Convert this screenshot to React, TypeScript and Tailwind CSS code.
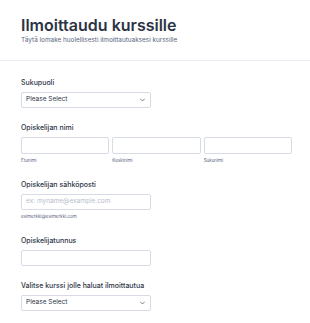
import React from 'react';

const Select = () => (
  <div className="flex h-[16px] w-[130px] items-center justify-between rounded-[2px] border border-[#d6dbe5] bg-white pl-[4px] pr-[5px]">
    <span className="text-[6.5px] text-[#2c3345]">Please Select</span>
    <svg width="5" height="4" viewBox="0 0 10 6" fill="none">
      <path d="M1 1l4 4 4-4" stroke="#57647e" strokeWidth="1.6" strokeLinecap="round" strokeLinejoin="round" />
    </svg>
  </div>
);

const Label = ({ children }: { children: React.ReactNode }) => (
  <div className="text-[7px] font-medium leading-[9px] text-[#2c3345]">{children}</div>
);

export default function App() {
  return (
    <div className="h-[323px] w-[310px] overflow-hidden bg-white font-['Inter',sans-serif]">
      <div className="px-[21px] pb-[15px] pt-[15px]">
        <h1 className="text-[16px] font-semibold leading-[20px] text-[#2c3345]">Ilmoittaudu kurssille</h1>
        <p className="mt-[1px] text-[6.4px] leading-[9px] text-[#57647e]">
          Täytä lomake huolellisesti ilmoittautuaksesi kurssille
        </p>
      </div>
      <div className="h-px bg-[#eaebf2]" />

      <div className="flex flex-col px-[21px] pt-[17px]">
        <Label>Sukupuoli</Label>
        <div className="mt-[5px]">
          <Select />
        </div>

        <div className="mt-[15px]">
          <Label>Opiskelijan nimi</Label>
        </div>
        <div className="mt-[5px] grid w-[271px] grid-cols-3 gap-[3px]">
          {['Etunimi', 'Keskinimi', 'Sukunimi'].map((s) => (
            <div key={s} className="flex flex-col">
              <div className="h-[17px] rounded-[2px] border border-[#d6dbe5] bg-white" />
              <span className="mt-[4px] text-[4.5px] leading-[6px] text-[#57647e]">{s}</span>
            </div>
          ))}
        </div>

        <div className="mt-[16px]">
          <Label>Opiskelijan sähköposti</Label>
        </div>
        <div className="mt-[5px] flex h-[16px] w-[130px] items-center rounded-[2px] border border-[#d6dbe5] bg-white pl-[4px]">
          <span className="text-[6.5px] text-[#b7bdca]">ex: myname@example.com</span>
        </div>
        <span className="mt-[4px] text-[4.5px] leading-[6px] text-[#57647e]">esimerkki@esimerkki.com</span>

        <div className="mt-[16px]">
          <Label>Opiskelijatunnus</Label>
        </div>
        <div className="mt-[5px] h-[16px] w-[130px] rounded-[2px] border border-[#d6dbe5] bg-white" />

        <div className="mt-[15px]">
          <Label>Valitse kurssi jolle haluat ilmoittautua</Label>
        </div>
        <div className="mt-[5px]">
          <Select />
        </div>
      </div>
    </div>
  );
}
